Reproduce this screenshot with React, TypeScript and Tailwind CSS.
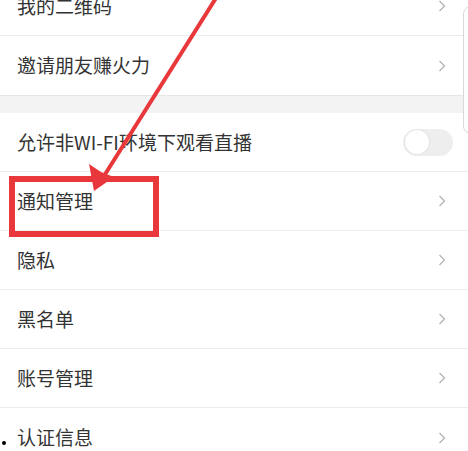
import React from 'react';

const Chevron = () => (
  <svg width="8" height="12" viewBox="0 0 8 12" className="shrink-0">
    <polyline points="1.5,1 6.5,6 1.5,11" fill="none" stroke="#b3b3b3" strokeWidth="1.3" />
  </svg>
);

const Row = ({ label, last, children }: { label: string; last?: boolean; children?: React.ReactNode }) => (
  <div className={`flex h-[59px] items-center justify-between pl-[17px] pr-[22px] ${last ? '' : 'border-b border-[#ececec]'}`}>
    <span className="text-[19px] text-[#333]">{label}</span>
    {children ?? <Chevron />}
  </div>
);

const App = () => {
  return (
    <div
      className="relative h-[451px] w-[468px] overflow-hidden bg-white"
      style={{ fontFamily: '"Noto Sans CJK SC", "Noto Sans", sans-serif' }}
    >
      <div className="-mt-[23px]">
        <Row label="我的二维码" />
        <Row label="邀请朋友赚火力" last />
        <div className="h-[18px] border-t border-[#e6e6e6] bg-[#f3f3f3]" />
        <Row label="允许非WI-FI环境下观看直播">
          <div className="mr-[-7px] flex h-[27px] w-[50px] items-center rounded-full bg-[#eeeeee] px-[2px]">
            <div className="h-[24px] w-[24px] rounded-full bg-white shadow-[0_0_2px_rgba(0,0,0,0.12)]" />
          </div>
        </Row>
        <Row label="通知管理" />
        <Row label="隐私" />
        <Row label="黑名单" />
        <Row label="账号管理" />
        <Row label="认证信息" last />
      </div>

      {/* edge of a panel behind */}
      <div className="absolute left-[463px] top-[6px] h-[128px] w-[20px] rounded-l-[8px] border border-[#d9d9d9] bg-white" />

      {/* stray dot */}
      <div className="absolute left-[2px] top-[441px] h-[4px] w-[4px] rounded-full bg-black" />

      {/* annotation */}
      <div className="absolute left-[9px] top-[176px] h-[61px] w-[150px] border-[6px] border-[#e8383b]" />
      <svg className="absolute left-0 top-0" width="468" height="451" viewBox="0 0 468 451">
        <line x1="216" y1="-2" x2="104" y2="176" stroke="#e8383b" strokeWidth="4" strokeLinecap="round" />
        <polygon points="94,191 89,164 101,172 114,177" fill="#e8383b" />
      </svg>
    </div>
  );
};

export default App;
